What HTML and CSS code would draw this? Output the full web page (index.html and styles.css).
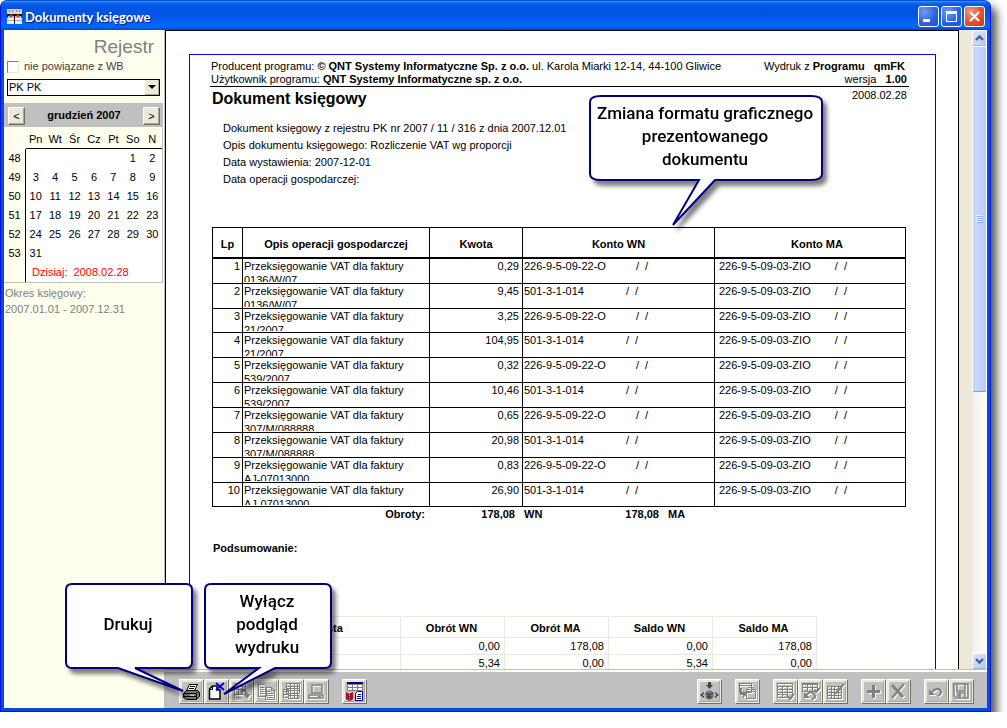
FILE: index.html
```html
<!DOCTYPE html>
<html lang="pl">
<head>
<meta charset="utf-8">
<title>Dokumenty księgowe</title>
<link rel="stylesheet" href="styles.css">
</head>
<body>
<main class="window">
  <header class="titlebar">
    <svg class="app-icon" width="15" height="15" viewBox="0 0 15 15" shape-rendering="crispEdges">
      <path fill="#d4d4d4" d="M0 0h15v5H0z"/><path fill="#888" d="M2 1h1v2H2zM5 1h1v2H5zM9 1h1v2H9zM12 1h1v2h-1z"/>
      <path fill="#111" d="M0 5h15v2H0zM0 7h1v1H0zM7 7h1v8H7z"/><path fill="#bbb" d="M1 7h6v2H1zM8 7h6v2H8z"/><path fill="#e01010" d="M2 6h4v1H2zM3 5h2v3H3zM9 6h4v1H9zM10 5h2v3h-2z"/>
      <path fill="#eee" d="M0 9h7v6H0zM8 9h7v6H8z"/><path fill="#aaa" d="M0 11h7v1H0zM8 11h7v1H8z"/>
    </svg>
    <h1 class="title">Dokumenty księgowe</h1>
    <button class="sys" aria-label="Minimalizuj"><svg width="19" height="19" viewBox="0 0 19 19"><path fill="#fff" d="M4 12h7v3H4z"/></svg></button>
    <button class="sys" aria-label="Maksymalizuj"><svg width="19" height="19" viewBox="0 0 19 19"><path fill="#fff" fill-rule="evenodd" d="M4 4h11v11H4zM5 7v7h9V7z"/></svg></button>
    <button class="sys sys-close" aria-label="Zamknij"><svg width="19" height="19" viewBox="0 0 19 19"><path stroke="#fff" stroke-width="2.2" d="M5 5l9 9M14 5l-9 9"/></svg></button>
  </header>

  <div class="client">
    <aside class="sidebar">
      <h2 class="register">Rejestr</h2>
      <label class="check"><input type="checkbox">nie powiązane z WB</label>
      <div class="combo">
        <select aria-label="Rejestr"><option>PK PK</option></select>
        <span class="combo-arrow"></span>
      </div>
      <section class="calendar">
        <div class="month">
          <button class="nav">&lt;</button><strong>grudzień 2007</strong><button class="nav">&gt;</button>
        </div>
        <table class="days">
          <thead><tr><th></th><th>Pn</th><th>Wt</th><th>Śr</th><th>Cz</th><th>Pt</th><th>So</th><th>N</th></tr></thead>
          <tbody>
            <tr><th>48</th><td></td><td></td><td></td><td></td><td></td><td>1</td><td>2</td></tr>
            <tr><th>49</th><td>3</td><td>4</td><td>5</td><td>6</td><td>7</td><td>8</td><td>9</td></tr>
            <tr><th>50</th><td>10</td><td>11</td><td>12</td><td>13</td><td>14</td><td>15</td><td>16</td></tr>
            <tr><th>51</th><td>17</td><td>18</td><td>19</td><td>20</td><td>21</td><td>22</td><td>23</td></tr>
            <tr><th>52</th><td>24</td><td>25</td><td>26</td><td>27</td><td>28</td><td>29</td><td>30</td></tr>
            <tr><th>53</th><td>31</td><td></td><td></td><td></td><td></td><td></td><td></td></tr>
            <tr><th></th><td class="today" colspan="7">Dzisiaj:&nbsp; 2008.02.28</td></tr>
          </tbody>
        </table>
      </section>
      <p class="period">Okres księgowy:<br>2007.01.01 - 2007.12.31</p>
    </aside>

    <div class="content">
      <div class="viewer">
        <div class="page">
          <article class="frame">
            <header class="doc-head">
              <div>Producent programu: <b>© QNT Systemy Informatyczne Sp. z o.o.</b> ul. Karola Miarki 12-14, 44-100 Gliwice<br>Użytkownik programu: <b>QNT Systemy Informatyczne sp. z o.o.</b></div>
              <div class="doc-program"><span>Wydruk z <b>Programu &nbsp; qmFK</b></span><br>wersja &nbsp; <b>1.00</b></div>
            </header>
            <div class="doc-title"><h2>Dokument księgowy</h2><span>2008.02.28</span></div>
            <div class="doc-info">
              <p>Dokument księgowy z rejestru PK nr 2007 / 11 / 316 z dnia 2007.12.01</p>
              <p>Opis dokumentu księgowego: Rozliczenie VAT wg proporcji</p>
              <p>Data wystawienia: 2007-12-01</p>
              <p>Data operacji gospodarczej:</p>
            </div>
            <table class="entries">
              <colgroup><col class="c-lp"><col class="c-desc"><col class="c-amount"><col class="c-wn"><col></colgroup>
              <thead><tr><th>Lp</th><th>Opis operacji gospodarczej</th><th>Kwota</th><th>Konto WN</th><th>Konto MA</th></tr></thead>
              <tbody>
                <tr><td><div>1</div></td><td><div>Przeksięgowanie VAT dla faktury<br>0136/W/07</div></td><td><div>0,29</div></td><td><div class="acct">226-9-5-09-22-O<span>/&nbsp; /</span></div></td><td><div class="acct">226-9-5-09-03-ZIO<span>/&nbsp; /</span></div></td></tr>
                <tr><td><div>2</div></td><td><div>Przeksięgowanie VAT dla faktury<br>0136/W/07</div></td><td><div>9,45</div></td><td><div class="acct acct-short">501-3-1-014<span>/&nbsp; /</span></div></td><td><div class="acct">226-9-5-09-03-ZIO<span>/&nbsp; /</span></div></td></tr>
                <tr><td><div>3</div></td><td><div>Przeksięgowanie VAT dla faktury<br>21/2007</div></td><td><div>3,25</div></td><td><div class="acct">226-9-5-09-22-O<span>/&nbsp; /</span></div></td><td><div class="acct">226-9-5-09-03-ZIO<span>/&nbsp; /</span></div></td></tr>
                <tr><td><div>4</div></td><td><div>Przeksięgowanie VAT dla faktury<br>21/2007</div></td><td><div>104,95</div></td><td><div class="acct acct-short">501-3-1-014<span>/&nbsp; /</span></div></td><td><div class="acct">226-9-5-09-03-ZIO<span>/&nbsp; /</span></div></td></tr>
                <tr><td><div>5</div></td><td><div>Przeksięgowanie VAT dla faktury<br>539/2007</div></td><td><div>0,32</div></td><td><div class="acct">226-9-5-09-22-O<span>/&nbsp; /</span></div></td><td><div class="acct">226-9-5-09-03-ZIO<span>/&nbsp; /</span></div></td></tr>
                <tr><td><div>6</div></td><td><div>Przeksięgowanie VAT dla faktury<br>539/2007</div></td><td><div>10,46</div></td><td><div class="acct acct-short">501-3-1-014<span>/&nbsp; /</span></div></td><td><div class="acct">226-9-5-09-03-ZIO<span>/&nbsp; /</span></div></td></tr>
                <tr><td><div>7</div></td><td><div>Przeksięgowanie VAT dla faktury<br>307/M/088888</div></td><td><div>0,65</div></td><td><div class="acct">226-9-5-09-22-O<span>/&nbsp; /</span></div></td><td><div class="acct">226-9-5-09-03-ZIO<span>/&nbsp; /</span></div></td></tr>
                <tr><td><div>8</div></td><td><div>Przeksięgowanie VAT dla faktury<br>307/M/088888</div></td><td><div>20,98</div></td><td><div class="acct acct-short">501-3-1-014<span>/&nbsp; /</span></div></td><td><div class="acct">226-9-5-09-03-ZIO<span>/&nbsp; /</span></div></td></tr>
                <tr><td><div>9</div></td><td><div>Przeksięgowanie VAT dla faktury<br>AJ-07013000</div></td><td><div>0,83</div></td><td><div class="acct">226-9-5-09-22-O<span>/&nbsp; /</span></div></td><td><div class="acct">226-9-5-09-03-ZIO<span>/&nbsp; /</span></div></td></tr>
                <tr><td><div>10</div></td><td><div>Przeksięgowanie VAT dla faktury<br>AJ-07013000</div></td><td><div>26,90</div></td><td><div class="acct acct-short">501-3-1-014<span>/&nbsp; /</span></div></td><td><div class="acct">226-9-5-09-03-ZIO<span>/&nbsp; /</span></div></td></tr>
              </tbody>
            </table>
            <div class="totals"><span>Obroty:</span><span>178,08</span><span>WN</span><span>178,08</span><span>MA</span></div>
            <h3 class="summary-title">Podsumowanie:</h3>
            <table class="summary">
              <thead><tr><th class="s-name">Nazwa konta</th><th>Obrót WN</th><th>Obrót MA</th><th>Saldo WN</th><th>Saldo MA</th></tr></thead>
              <tbody>
                <tr><td></td><td>0,00</td><td>178,08</td><td>0,00</td><td>178,08</td></tr>
                <tr><td>226-9-5-09-22-O</td><td>5,34</td><td>0,00</td><td>5,34</td><td>0,00</td></tr>
              </tbody>
            </table>
          </article>
        </div>
        <div class="scrollbar">
          <button class="sb" aria-label="W górę"><svg width="13" height="14" viewBox="0 0 13 14"><path fill="none" stroke="#4d6185" stroke-width="2.4" d="M3 9l3.500-3.500L10 9"/></svg></button>
          <div class="thumb"><i></i><i></i><i></i><i></i></div>
          <div class="track"></div>
          <button class="sb" aria-label="W dół"><svg width="13" height="14" viewBox="0 0 13 14"><path fill="none" stroke="#4d6185" stroke-width="2.400" d="M3 5l3.500 3.500L10 5"/></svg></button>
        </div>
      </div>

      <footer class="toolbar">
        <div class="group">
          <button class="tool" aria-label="Drukuj"><svg viewBox="0 0 19 19"><path fill="#fff" stroke="#000" d="M7.500 2.500h8l-3 6h-8z"/><path stroke="#000" d="M8 4.500h5M7 6.500h5"/><path fill="#777" stroke="#000" d="M1.500 11.500l3-3h11l2 2v4l-3 3h-10l-3-2z"/><path stroke="#000" fill="none" d="M2 11.500h12l3-2M14.500 12v5M2 14.500h12"/><path stroke="#dd0" stroke-width="1.500" d="M8 13.200h4"/></svg></button>
          <button class="tool" aria-label="Wyłącz podgląd wydruku"><svg viewBox="0 0 19 19"><path fill="#fff" stroke="#000" stroke-width="1.500" d="M5.500 4H10v4h3v9H2.500V7z"/><path fill="none" stroke="#000" d="M2.500 7.500h3v-3"/><path stroke="#0000e8" stroke-width="1.800" d="M9 1l8 7M17 1L9 8"/></svg></button>
          <button class="tool off" aria-label="Filtruj" disabled><svg viewBox="0 0 19 19"><path fill="none" stroke="#808080" d="M2.500 1.500h11v11h-11zM2 4.500h12M2 7.500h12M6.500 2v11M10.500 2v11M2.500 13v4h8M4 15.500h5"/><path fill="none" stroke="#808080" stroke-width="2" d="M9 9q6-2 6 5"/><path fill="#808080" d="M11 12h8l-4 5z"/></svg></button>
          <button class="tool off" aria-label="Kopiuj" disabled><svg viewBox="0 0 19 19"><path fill="none" stroke="#808080" d="M1.500 2.500h6l2 2v10h-8zM8.500 5.500h6l3 3v9h-9zM14.500 5.500v3h3M3 5.500h4M3 7.500h4M3 9.500h4M3 11.500h4M10 9.500h3M10 11.500h6M10 13.500h6M10 15.500h6"/></svg></button>
          <button class="tool off" aria-label="Arkusz" disabled><svg viewBox="0 0 19 19"><path fill="none" stroke="#808080" d="M4.500 1.500h13v10h-13zM4 4.500h13M4 6.500h13M4 8.500h13M8.500 2v15M12.500 2v15M15.500 2v15M1.500 7.500h5v8h-5zM1 9.500h5M1 12.500h5M6 13.500h11v3H6"/></svg></button>
          <button class="tool off" aria-label="Komputer" disabled><svg viewBox="0 0 19 19"><path fill="none" stroke="#808080" stroke-width="1.500" d="M5 3h10v8H5zM2 13h14v3H2z"/><path stroke="#808080" d="M11 14.500h3"/></svg></button>
        </div>
        <div class="group">
          <button class="tool" aria-label="Format wydruku"><svg viewBox="0 0 19 19"><path fill="#fff" stroke="#808080" d="M2.500 2.500h15v6h-15z"/><path fill="#000090" d="M2 0h16v2H2z"/><path stroke="#808080" d="M2 5.500h16M7.500 3v6M12.500 3v6"/><path fill="#a01020" d="M1 10l3 2 4-2v7l-3 2h-1l-3-2z"/><path stroke="#e8b0b0" d="M4.500 13v5" stroke-dasharray="1"/><path fill="#fff" stroke="#0000b0" d="M12.500 9.500h5v9h-7v-7z"/><path stroke="#0000b0" d="M13 12.500h3M12 14.500h4M12 16.500h4"/></svg></button>
        </div>
        <div class="spacer"></div>
        <div class="group">
          <button class="tool" aria-label="Księguj"><svg viewBox="0 0 19 19"><path fill="#444" d="M8 0h3v3h2l-3.500 4L6 3h2zM0 13l4-3v2H3v2h1v2zM19 13l-4-3v2h1v2h-1v2z"/><circle cx="9.500" cy="13" r="4.500" fill="#777"/><path fill="none" stroke="#333" d="M6 11l3 2 4-2M9 13v4M7 15h5"/></svg></button>
        </div>
        <div class="group">
          <button class="tool off" aria-label="Okna" disabled><svg viewBox="0 0 19 19"><path fill="none" stroke="#808080" d="M1.500 1.500h12v9h-12zM2 3.500h11M8.500 7.500h9v9h-9zM9 9.500h8M10 5.500h5v2"/><path fill="none" stroke="#808080" stroke-width="2" d="M3 6v6h4"/><path fill="#808080" d="M5 8l4 4-4 4z"/></svg></button>
        </div>
        <div class="group">
          <button class="tool off" aria-label="Zatwierdź tabelę" disabled><svg viewBox="0 0 19 19"><path fill="none" stroke="#808080" d="M1.500 1.500h15v14h-15zM2 4.500h14M2 7.500h14M2 10.500h14M2 12.500h10M6.500 4v11M11.500 4v11"/><path stroke="#808080" stroke-width="2" fill="none" d="M11 13l3 4 4-5"/></svg></button>
          <button class="tool off" aria-label="Cofnij tabelę" disabled><svg viewBox="0 0 19 19"><path fill="none" stroke="#808080" d="M1.500 1.500h15v8h-15zM2 5.500h14M6.500 2v8M11.500 2v8"/><path fill="#808080" d="M1 1h16v2H1z"/><path fill="none" stroke="#808080" stroke-width="2" d="M5 13q5-5 8-1t-2 5M13 8l2 2 4-4"/><path fill="#808080" d="M3 10v6h6z"/></svg></button>
          <button class="tool off" aria-label="Edytuj tabelę" disabled><svg viewBox="0 0 19 19"><path fill="none" stroke="#808080" d="M1.500 4.500h14v12h-14zM2 7.500h14M2 10.500h14M2 13.500h14M5.500 5v12M8.500 5v12M12.500 5v12"/><path stroke="#808080" stroke-width="2" d="M9 12l9-10"/></svg></button>
        </div>
        <div class="group">
          <button class="tool off" aria-label="Dodaj" disabled><svg viewBox="0 0 19 19"><path fill="#808080" d="M8 3h3v5h5v3h-5v5H8v-5H3V8h5z"/></svg></button>
          <button class="tool off" aria-label="Usuń" disabled><svg viewBox="0 0 19 19"><path stroke="#808080" stroke-width="3" d="M3 3l11 12"/><path stroke="#808080" stroke-width="2" d="M15 2L3 16"/></svg></button>
        </div>
        <div class="group">
          <button class="tool off" aria-label="Cofnij" disabled><svg viewBox="0 0 19 19"><path fill="none" stroke="#808080" stroke-width="2" d="M5 10q5-5 8-2t-2 6"/><path fill="#808080" d="M2 7v6h6z"/></svg></button>
          <button class="tool off" aria-label="Zapisz" disabled><svg viewBox="0 0 19 19"><path fill="none" stroke="#808080" stroke-width="1.500" d="M2 2h14v14H4l-2-2zM5 2v7h8V2M6 16v-5h7v5"/><path fill="#808080" d="M7 12h2v3H7z"/></svg></button>
        </div>
      </footer>
    </div>
  </div>

  <div class="callout callout-print">
    <svg width="130" height="112" viewBox="0 0 130 112"><path d="M7 1h114q6 0 6 6v72q0 6-6 6H70l48 23L53 85H7q-6 0-6-6V7q0-6 6-6z"/></svg>
    <p>Drukuj</p>
  </div>
  <div class="callout callout-close">
    <svg width="130" height="114" viewBox="0 0 130 114"><path d="M7 1h114q6 0 6 6v72q0 6-6 6H71L20 111 55 85H7q-6 0-6-6V7q0-6 6-6z"/></svg>
    <p>Wyłącz<br>podgląd<br>wydruku</p>
  </div>
  <div class="callout callout-format">
    <svg width="236" height="132" viewBox="0 0 236 132"><path d="M12 1h210q11 0 11 6v72q0 6-11 6h-96L84 130l26-45H12Q1 85 1 79V7Q1 1 12 1z"/></svg>
    <p>Zmiana formatu graficznego<br>prezentowanego<br>dokumentu</p>
  </div>
</main>
</body>
</html>
```
FILE: styles.css
```css
* { box-sizing: border-box; }
body { margin: 0; background: #fff; color: #000; font: 11px/13px "Liberation Sans", Arial, sans-serif; overflow: hidden; }
h1, h2, h3, p { margin: 0; font-size: inherit; }
button { margin: 0; padding: 0; font: inherit; color: inherit; }
svg { display: block; }
table { border-spacing: 0; table-layout: fixed; }
th, td { padding: 0; }

.window {
  position: relative; display: flex; flex-direction: column;
  width: calc(100vw - 16px); height: calc(100vh - 16px);
  border: 1px solid #0019cf; border-top-color: #0050d8; border-radius: 7px 7px 0 0;
  background: #0a48e4; box-shadow: 6px 7px 9px rgba(0, 0, 0, .65);
}
.titlebar {
  display: flex; align-items: center; gap: 2px; height: 29px; padding: 2px 5px 0 6px; border-radius: 6px 6px 0 0;
  background: linear-gradient(#3d95ff 0, #0a64ee 2px, #0054e3 6px, #0055e5 15px, #0366fc 23px, #0264fa 26px, #0045c8 29px);
}
.title { flex: 1; padding-left: 1px; color: #fff; font: 700 13px/18px Lato, sans-serif; text-shadow: 1px 1px 1px #0a1883; }
.sys {
  width: 21px; height: 21px; border: 1px solid #fff; border-radius: 3px;
  background: radial-gradient(circle at 30% 25%, #6c9cf8, #2a5fe2 60%, #1c4fd8);
}
.sys-close { background: radial-gradient(circle at 30% 25%, #f09a80, #e0512c 55%, #c83c14); }

.client { flex: 1; display: flex; min-height: 0; margin: 0 3px 3px; background: #c0c0c0; }
.sidebar { width: 160px; background: #ffffee; }
.content { flex: 1; min-width: 0; display: flex; flex-direction: column; }

.register { padding: 6px 10px 0 0; color: #808080; text-align: right; font-size: 19px; font-weight: 400; line-height: 21px; }
.check { display: flex; align-items: center; gap: 5px; height: 13px; margin: 3px 0 0 3px; color: #404040; }
.check input {
  appearance: none; width: 12px; height: 12px; margin: 0; background: #fff;
  border: 1px solid; border-color: #808080 #e8e8d8 #e8e8d8 #808080;
}
.combo { position: relative; margin: 6px 4px 7px 3px; }
.combo select {
  appearance: none; display: block; width: 100%; height: 17px; padding: 0 1px; background: #fff;
  border: 1px solid #000; border-radius: 0; color: #000; font: inherit;
}
.combo-arrow {
  position: absolute; top: 1px; right: 1px; bottom: 1px; width: 14px; display: grid; place-items: center;
  background: #ece9d8; border-right: 1px solid #aca899; border-bottom: 1px solid #aca899; pointer-events: none;
}
.combo-arrow::after { content: ""; border: 4px solid transparent; border-top-color: #000; border-bottom: 0; }

.calendar { margin-right: 1px; border: 1px solid #c0c0c0; border-width: 0 1px 1px 0; }
.month { display: flex; align-items: center; justify-content: space-between; height: 24px; margin-right: -1px; padding: 1px 3px 0 4px; background: #c0c0c0; }
.nav {
  width: 17px; height: 18px; background: #ece9d8; line-height: 14px;
  border: 1px solid; border-color: #fff #716f64 #716f64 #fff; box-shadow: inset -1px -1px #aca899;
}
.days { width: 100%; text-align: center; }
.days th { height: 19px; font-weight: 400; }
.days th:first-child { width: 22px; }
.days thead th { height: 22px; padding-top: 4px; border-bottom: 1px solid #000; }
.days thead th:first-child { border-bottom-color: #ffffee; }
.days td { background: #fff; }
.days tbody th { border-right: 1px solid #000; }
.days .today { padding-left: 6px; color: #f00; text-align: left; }
.period { padding: 2px 0 0 1px; color: #808080; line-height: 16px; }

.viewer { flex: 1; min-height: 0; display: flex; overflow: hidden; background: #ece9d8; border: 1px solid #c0c0c0; border-width: 0 0 1px 1px; }
.page { flex: 1; height: 1100px; padding: 23px 22px 0 23px; background: #fff; border: 1px solid #000; }
.frame { height: 1000px; padding: 5px 26px 0 20px; border: 1px solid #0000e0; }
.doc-head { display: flex; justify-content: space-between; padding: 0 2px 0 1px; border-bottom: 1px solid #000; white-space: nowrap; }
.doc-program { text-align: right; }
.doc-program span { padding-right: 2px; }
.doc-title { display: flex; justify-content: space-between; padding: 0 2px; line-height: 17px; }
.doc-title h2 { font-size: 16px; line-height: 24px; }
.doc-info { padding: 9px 0 39px 13px; line-height: 17px; }

.entries { width: calc(100% - 5px); margin-left: 2px; border-right: 1px solid #000; line-height: 14px; }
.c-lp { width: 30px; }
.c-desc { width: 187px; }
.c-amount { width: 93px; }
.c-wn { width: 192px; }
.entries th { height: 31px; padding-top: 2px; border: 1px solid #000; border-right: 0; }
.entries th:last-child { padding-left: 14px; }
.entries td { border: 1px solid #000; border-width: 1px 0 0 1px; vertical-align: top; }
.entries td div { height: 24px; padding: 0 1px; overflow: hidden; white-space: nowrap; border-bottom: 1px solid #fff; }
.entries tr:nth-child(3) td div { height: 23px; }
.entries tbody tr:last-child td { border-bottom-width: 1px; }
.entries tbody tr:last-child td div { height: 23px; }
.entries td:nth-child(1) { text-align: right; }
.entries td:nth-child(1) div { padding-right: 2px; }
.entries td:nth-child(3) { text-align: right; }
.entries td:nth-child(3) div { padding-right: 3px; }
.entries td:last-child div { padding-left: 4px; }
.acct { display: flex; gap: 30px; }
.acct-short { gap: 42px; }
.entries td:last-child .acct { gap: 24px; }

.totals { display: grid; grid-template-columns: 215px 90px 9px 30px 105px 9px 1fr; padding-top: 1px; font-weight: 700; }
.totals span:nth-child(-n+2), .totals span:nth-child(4) { text-align: right; }
.totals span:nth-child(3) { grid-column: 4; }
.totals span:nth-child(5) { grid-column: 7; }
.summary-title { padding: 21px 0 61px 3px; }
.summary { width: 605px; margin-left: 2px; border-collapse: collapse; }
.summary th, .summary td { height: 17px; padding: 0 4px 0 2px; border: 1px solid #ece9d8; text-align: right; white-space: nowrap; }
.summary th { height: 21px; padding-top: 3px; text-align: center; }
.summary .s-name { width: 188px; padding-left: 10px; }
.summary td:first-child { text-align: left; }

.scrollbar { width: 15px; margin-left: 13px; height: 100%; display: flex; flex-direction: column; background: linear-gradient(90deg, #f3f1ec, #fefefb); }
.sb { display: grid; place-items: center; width: 15px; height: 16px; background: linear-gradient(135deg, #dce6fe, #b4c8f6); border: 1px solid #fff; border-bottom-color: #9cb4e4; border-radius: 2px; }
.thumb {
  height: 346px; display: flex; flex-direction: column; align-items: center; justify-content: center; gap: 1px;
  background: linear-gradient(90deg, #c9d8fc, #bacdfa); border: 1px solid #fff; border-bottom-color: #84a0d8; border-radius: 2px;
}
.thumb i { width: 6px; height: 1px; background: #8cb0f8; box-shadow: -1px -1px #eef4fe; }
.track { flex: 1; }

.toolbar { display: flex; gap: 13px; padding: 7px 13px 4px 15px; background: #c0c0c0; border-top: 2px solid #ffffee; }
.group { display: flex; }
.spacer { flex: 1; }
.tool {
  display: grid; place-items: center; width: 25px; height: 25px; background: #c0c0c0;
  border: 1px solid; border-color: #fff #716f64 #716f64 #fff;
  box-shadow: inset 0 0 0 1px #ece9d8, inset -2px -2px #aca899, inset 2px 2px #ece9d8;
}
.tool svg { width: 19px; height: 19px; }
.off svg { filter: drop-shadow(1px 1px 0 #fff); }

.callout { position: absolute; filter: drop-shadow(4px 5px 2px rgba(0, 0, 0, .5)); }
.callout path { fill: #fff; stroke: #000080; stroke-width: 2; stroke-linejoin: miter; }
.callout p {
  position: absolute; top: 0; left: 0; width: calc(100% - 4px); height: 82px; display: grid; place-content: center;
  text-align: center; white-space: nowrap; font: 500 17px/23px Roboto, "Liberation Sans", sans-serif;
}
.callout-print { left: 64px; top: 582px; }
.callout-close { left: 203px; top: 582px; }
.callout-format { left: 588px; top: 94px; }
```
